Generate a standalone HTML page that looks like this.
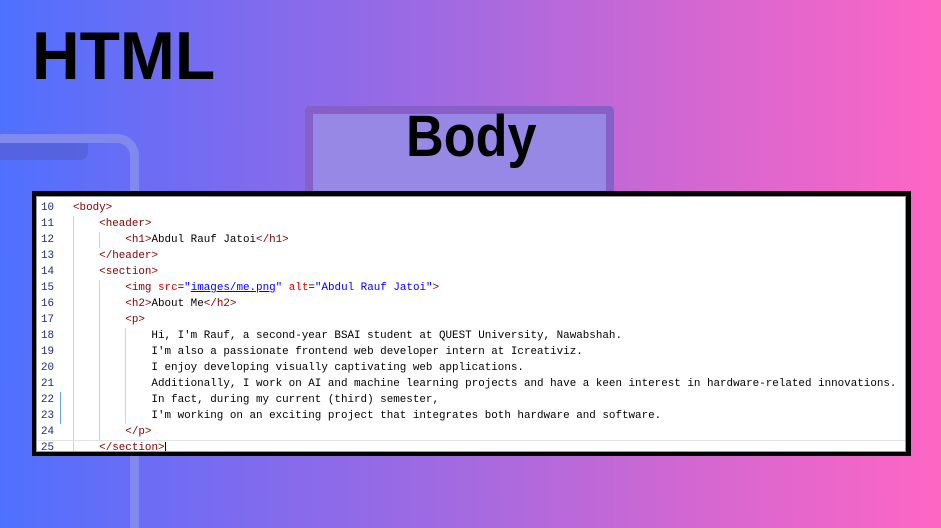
<!DOCTYPE html>
<html style="width:941px;height:528px;overflow:hidden"><head><meta charset="utf-8"><style>
*{margin:0;padding:0;box-sizing:border-box}
body{width:941px;height:528px;overflow:hidden;position:relative;background:linear-gradient(90deg,#4f70fe 0%,#7c6bef 25%,#a56ae0 50%,#d067d2 72%,#ff66c4 100%);font-family:"Liberation Sans",sans-serif}
.t{position:absolute;font-weight:bold;color:#000;white-space:nowrap;transform-origin:left top}
.code{position:absolute;left:32px;top:191px;width:879px;height:265px;background:#000;padding:5px 5px 4px 4px}
.in{background:#fff;width:100%;height:100%;border:1px solid #999;position:relative;padding-top:3px;overflow:hidden}
.l{height:16px;line-height:16px;font-family:"Liberation Mono",monospace;font-size:10.9px;white-space:pre;position:relative}
.n{position:absolute;left:4px;color:#1e2a78}
.c{position:absolute;left:36px;color:#000}
.g{color:#800000}.a{color:#e50000}.s{color:#0000ff}.u{text-decoration:underline}
.guide{position:absolute;width:1px;background:#d0d0d0}
</style></head><body>
<div style="position:absolute;left:0;top:0;width:941px;height:528px;overflow:hidden">
<div style="position:absolute;left:-30px;top:134px;width:169px;height:394px;border:9px solid #8189ef;border-bottom:none;border-radius:22px 22px 0 0;"></div>
</div>
<div style="position:absolute;left:0;top:143px;width:88px;height:17px;background:#5560d8;border-radius:0 0 8px 0;opacity:.8"></div>
<div style="position:absolute;left:305px;top:106px;width:309px;height:85px;background:#9888e6;border:8px solid #8660c7;border-bottom:none;border-radius:5px 5px 0 0;"></div>
<div class="t" style="left:32px;top:17px;font-size:68px;transform:scaleX(.97)">HTML</div>
<div class="t" style="left:406px;top:103px;font-size:58px;transform:scaleX(.9)">Body</div>
<div class="code"><div class="in">
<div class="guide" style="left:36px;top:19px;height:240px"></div>
<div class="guide" style="left:62px;top:35px;height:16px"></div>
<div class="guide" style="left:62px;top:83px;height:160px"></div>
<div class="guide" style="left:88px;top:131px;height:96px"></div>
<div class="guide" style="left:23px;top:195px;height:32px;background:#6aa9d6"></div>
<div class="l"><span class="n">10</span><span class="c"><span class="g">&lt;body&gt;</span></span></div>
<div class="l"><span class="n">11</span><span class="c">    <span class="g">&lt;header&gt;</span></span></div>
<div class="l"><span class="n">12</span><span class="c">        <span class="g">&lt;h1&gt;</span>Abdul Rauf Jatoi<span class="g">&lt;/h1&gt;</span></span></div>
<div class="l"><span class="n">13</span><span class="c">    <span class="g">&lt;/header&gt;</span></span></div>
<div class="l"><span class="n">14</span><span class="c">    <span class="g">&lt;section&gt;</span></span></div>
<div class="l"><span class="n">15</span><span class="c">        <span class="g">&lt;img</span> <span class="a">src</span>=<span class="s">"<span class="u">images/me.png</span>"</span> <span class="a">alt</span>=<span class="s">"Abdul Rauf Jatoi"</span><span class="g">&gt;</span></span></div>
<div class="l"><span class="n">16</span><span class="c">        <span class="g">&lt;h2&gt;</span>About Me<span class="g">&lt;/h2&gt;</span></span></div>
<div class="l"><span class="n">17</span><span class="c">        <span class="g">&lt;p&gt;</span></span></div>
<div class="l"><span class="n">18</span><span class="c">            Hi, I'm Rauf, a second-year BSAI student at QUEST University, Nawabshah.</span></div>
<div class="l"><span class="n">19</span><span class="c">            I'm also a passionate frontend web developer intern at Icreativiz.</span></div>
<div class="l"><span class="n">20</span><span class="c">            I enjoy developing visually captivating web applications.</span></div>
<div class="l"><span class="n">21</span><span class="c">            Additionally, I work on AI and machine learning projects and have a keen interest in hardware-related innovations.</span></div>
<div class="l"><span class="n">22</span><span class="c">            In fact, during my current (third) semester,</span></div>
<div class="l"><span class="n">23</span><span class="c">            I'm working on an exciting project that integrates both hardware and software.</span></div>
<div class="l"><span class="n">24</span><span class="c">        <span class="g">&lt;/p&gt;</span></span></div>
<div class="l" style="border-top:1px solid #e4e4e4;line-height:15px"><span class="n">25</span><span class="c">    <span class="g">&lt;/section&gt;</span><span style="border-left:1px solid #000"></span></span></div>
</div></div>
</body></html>
